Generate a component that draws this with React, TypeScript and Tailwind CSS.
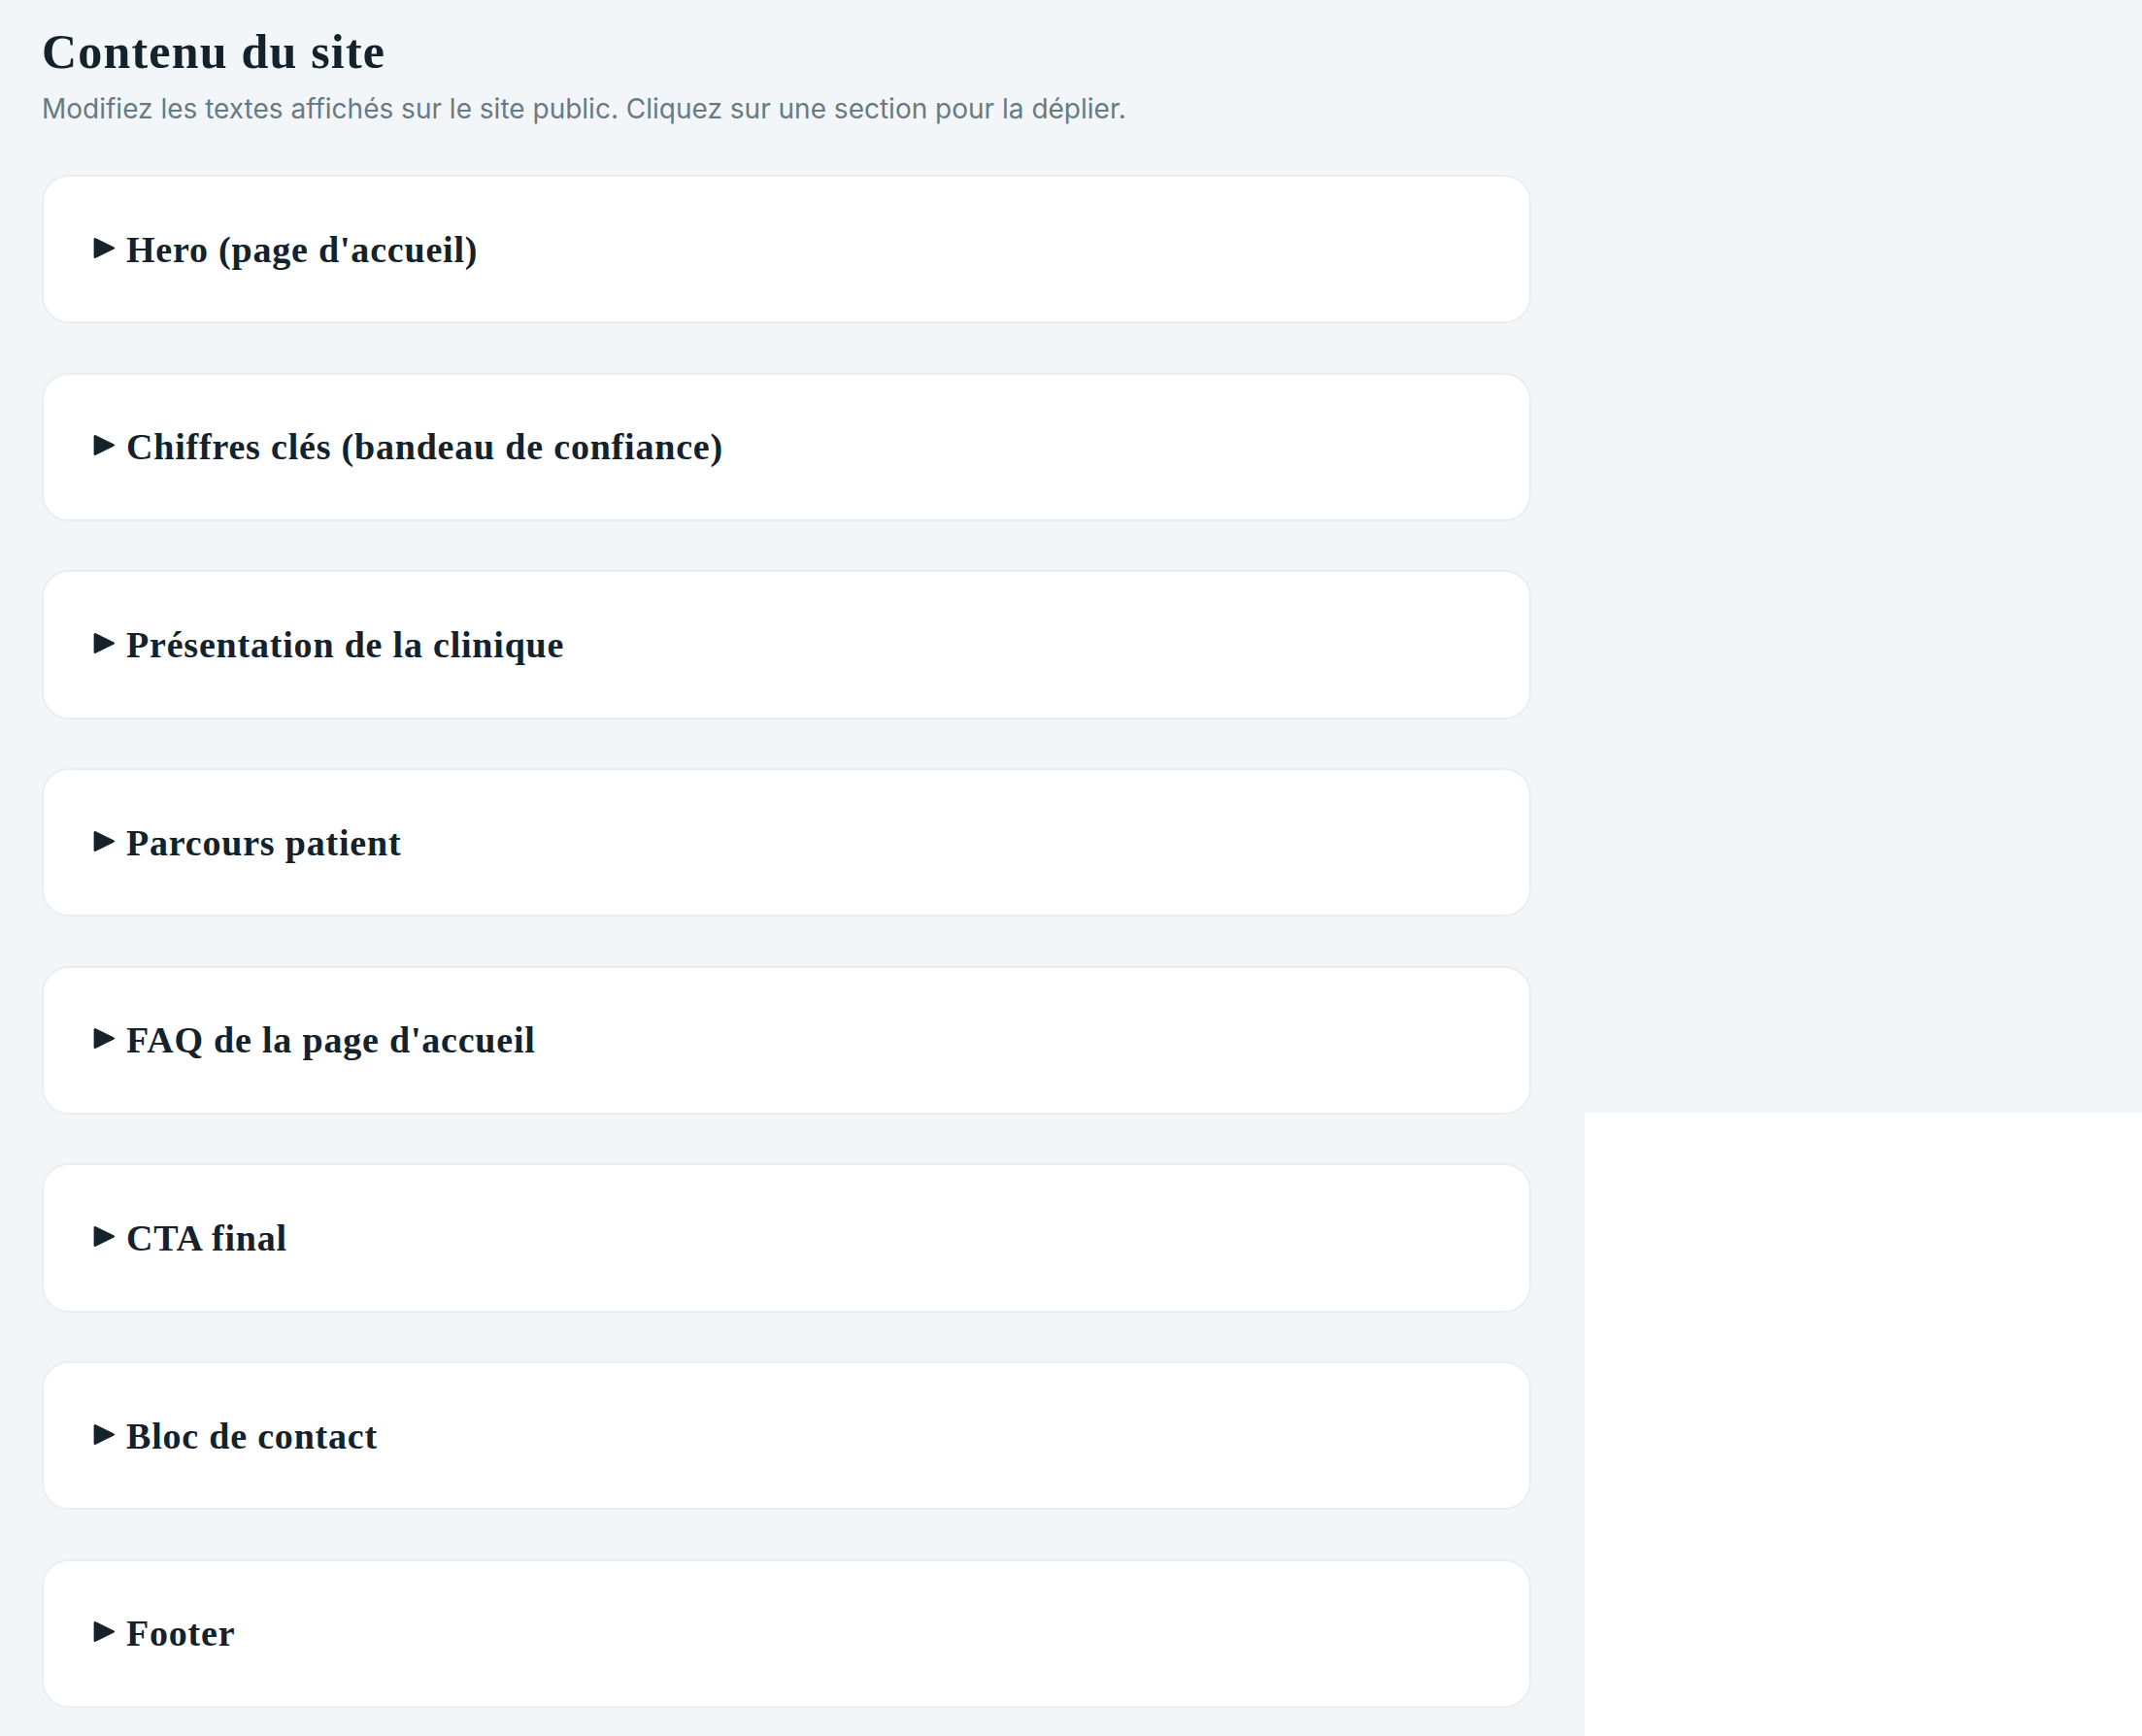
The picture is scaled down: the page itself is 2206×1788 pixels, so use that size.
const sections = [
  "Hero (page d'accueil)",
  "Chiffres clés (bandeau de confiance)",
  "Présentation de la clinique",
  "Parcours patient",
  "FAQ de la page d'accueil",
  "CTA final",
  "Bloc de contact",
  "Footer",
];

const Arrow = () => (
  <svg width="23" height="23" viewBox="0 0 23 23" className="shrink-0 -mt-[3px]">
    <path d="M2.6 1.3 Q0.6 0.3 0.6 2.6 L0.6 20.4 Q0.6 22.7 2.6 21.7 L21.4 12.6 Q23 11.5 21.4 10.4 Z" fill="#13222b" />
  </svg>
);

export default function App() {
  return (
    <div className="min-h-screen bg-[linear-gradient(to_bottom,#f3f6f9_1146px,#ffffff_1146px)]">
      <div className="w-[1632px] min-h-screen bg-[#f3f6f9] pl-[43px] pt-[28px] pb-[28px]">
        {/* header */}
        <h1 className="text-[50px] leading-[50px] font-bold tracking-[1.2px] text-[#13222b] font-['Liberation_Serif',serif]">
          Contenu du site
        </h1>
        <p className="mt-[16px] text-[28px] leading-[36px] text-[#687a82] font-['Inter',sans-serif]">
          Modifiez les textes affichés sur le site public. Cliquez sur une section pour la déplier.
        </p>

        {/* sections */}
        <div className="mt-[50px] flex flex-col gap-[50.4px] w-[1534px]">
          {sections.map((s) => (
            <div
              key={s}
              className="h-[153.3px] bg-white border-2 border-[#eaeef1] rounded-[28px] pl-[51px] flex items-center gap-[11px] cursor-pointer"
            >
              <Arrow />
              <span className="text-[38px] leading-[38px] font-bold tracking-[0.8px] text-[#13222b] font-['Liberation_Serif',serif]">
                {s}
              </span>
            </div>
          ))}
        </div>
      </div>
    </div>
  );
}
